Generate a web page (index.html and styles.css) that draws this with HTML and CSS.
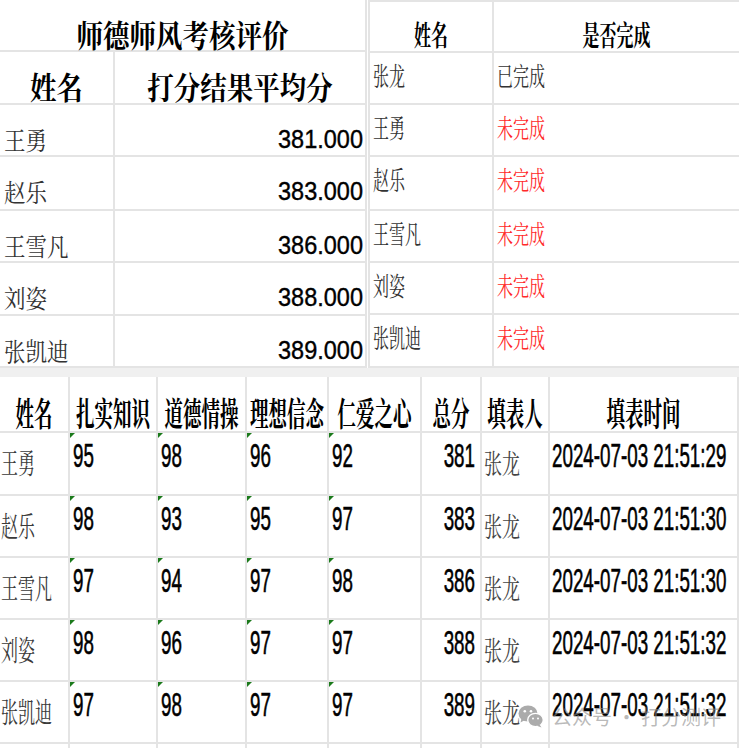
FILE: index.html
```html
<!DOCTYPE html>
<html lang="zh-CN">
<head>
<meta charset="utf-8">
<title>师德师风考核评价</title>
<link rel="stylesheet" href="styles.css">
</head>
<body>
<div class="page">
  <div class="top">
    <div class="ta">
      <div class="title"><span class="s">师德师风考核评价</span></div>
      <div class="hd"><span class="s">姓名</span></div>
      <div class="hd"><span class="s">打分结果平均分</span></div>
      <div class="nm"><span class="s">王勇</span></div>
      <div class="num"><span class="s">381.000</span></div>
      <div class="nm"><span class="s">赵乐</span></div>
      <div class="num"><span class="s">383.000</span></div>
      <div class="nm"><span class="s">王雪凡</span></div>
      <div class="num"><span class="s">386.000</span></div>
      <div class="nm"><span class="s">刘姿</span></div>
      <div class="num"><span class="s">388.000</span></div>
      <div class="nm"><span class="s">张凯迪</span></div>
      <div class="num"><span class="s">389.000</span></div>
    </div>
    <div class="tb">
      <div class="hd"><span class="s">姓名</span></div>
      <div class="hd"><span class="s">是否完成</span></div>
      <div class="bd"><span class="s">张龙</span></div>
      <div class="bd"><span class="s">已完成</span></div>
      <div class="bd"><span class="s">王勇</span></div>
      <div class="bd red"><span class="s">未完成</span></div>
      <div class="bd"><span class="s">赵乐</span></div>
      <div class="bd red"><span class="s">未完成</span></div>
      <div class="bd"><span class="s">王雪凡</span></div>
      <div class="bd red"><span class="s">未完成</span></div>
      <div class="bd"><span class="s">刘姿</span></div>
      <div class="bd red"><span class="s">未完成</span></div>
      <div class="bd"><span class="s">张凯迪</span></div>
      <div class="bd red"><span class="s">未完成</span></div>
    </div>
  </div>
  <div class="band"></div>
  <div class="tc">
    <div class="hd"><span class="s">姓名</span></div>
    <div class="hd"><span class="s">扎实知识</span></div>
    <div class="hd"><span class="s">道德情操</span></div>
    <div class="hd"><span class="s">理想信念</span></div>
    <div class="hd"><span class="s">仁爱之心</span></div>
    <div class="hd"><span class="s">总分</span></div>
    <div class="hd"><span class="s">填表人</span></div>
    <div class="hd"><span class="s">填表时间</span></div>

    <div class="nm"><span class="s">王勇</span></div>
    <div class="sc"><span class="s">95</span></div>
    <div class="sc"><span class="s">98</span></div>
    <div class="sc"><span class="s">96</span></div>
    <div class="sc"><span class="s">92</span></div>
    <div class="tot"><span class="s">381</span></div>
    <div class="who"><span class="s">张龙</span></div>
    <div class="dt"><span class="s">2024-07-03 21:51:29</span></div>

    <div class="nm"><span class="s">赵乐</span></div>
    <div class="sc"><span class="s">98</span></div>
    <div class="sc"><span class="s">93</span></div>
    <div class="sc"><span class="s">95</span></div>
    <div class="sc"><span class="s">97</span></div>
    <div class="tot"><span class="s">383</span></div>
    <div class="who"><span class="s">张龙</span></div>
    <div class="dt"><span class="s">2024-07-03 21:51:30</span></div>

    <div class="nm"><span class="s">王雪凡</span></div>
    <div class="sc"><span class="s">97</span></div>
    <div class="sc"><span class="s">94</span></div>
    <div class="sc"><span class="s">97</span></div>
    <div class="sc"><span class="s">98</span></div>
    <div class="tot"><span class="s">386</span></div>
    <div class="who"><span class="s">张龙</span></div>
    <div class="dt"><span class="s">2024-07-03 21:51:30</span></div>

    <div class="nm"><span class="s">刘姿</span></div>
    <div class="sc"><span class="s">98</span></div>
    <div class="sc"><span class="s">96</span></div>
    <div class="sc"><span class="s">97</span></div>
    <div class="sc"><span class="s">97</span></div>
    <div class="tot"><span class="s">388</span></div>
    <div class="who"><span class="s">张龙</span></div>
    <div class="dt"><span class="s">2024-07-03 21:51:32</span></div>

    <div class="nm"><span class="s">张凯迪</span></div>
    <div class="sc"><span class="s">97</span></div>
    <div class="sc"><span class="s">98</span></div>
    <div class="sc"><span class="s">97</span></div>
    <div class="sc"><span class="s">97</span></div>
    <div class="tot"><span class="s">389</span></div>
    <div class="who"><span class="s">张龙</span></div>
    <div class="dt"><span class="s">2024-07-03 21:51:32</span></div>

    <div class="empty"></div><div class="empty"></div><div class="empty"></div><div class="empty"></div>
    <div class="empty"></div><div class="empty"></div><div class="empty"></div><div class="empty"></div>
  </div>

  <div class="watermark">
    <svg class="wx" width="26" height="23" viewBox="0 0 26 23">
      <ellipse cx="10" cy="8.5" rx="9.5" ry="8" fill="#ababab"/>
      <path d="M3.5 13.5 L2.5 17.5 L7 15 Z" fill="#ababab"/>
      <circle cx="6.8" cy="6.3" r="1.3" fill="#fff"/>
      <circle cx="13" cy="6.3" r="1.3" fill="#fff"/>
      <ellipse cx="17.5" cy="15" rx="7.8" ry="6.6" fill="#ababab" stroke="#fff" stroke-width="1.4"/>
      <path d="M21.5 19.5 L23.5 22.5 L19 20.8 Z" fill="#ababab"/>
      <circle cx="15" cy="13.5" r="1" fill="#fff"/>
      <circle cx="20" cy="13.5" r="1" fill="#fff"/>
    </svg>
    <span class="wm-text">公众号 · 打分测评</span>
  </div>
</div>
</body>
</html>
```

FILE: styles.css
```css
* {
  box-sizing: border-box;
  margin: 0;
  padding: 0;
}

html, body {
  width: 739px;
  height: 748px;
  overflow: hidden;
  background: #ffffff;
}

body {
  font-family: "Noto Serif CJK SC", "Noto Sans CJK SC", serif;
  color: #000;
}

.page {
  position: relative;
  width: 739px;
  height: 748px;
  overflow: hidden;
}

.s {
  display: inline-block;
  line-height: 1;
  white-space: nowrap;
  transform-origin: 50% 50%;
}

/* ---------- top section ---------- */
.top {
  display: flex;
  gap: 1px;
  height: 368px;
}

/* left table: 师德师风考核评价 */
.ta {
  width: 367px;
  display: grid;
  grid-template-columns: 115px 252px;
  grid-template-rows: 52px 53px 52px 54px 52px 53px 52px;
}

.ta > div {
  display: flex;
  align-items: flex-start;
  border-bottom: 2px solid #e4e4e4;
  border-right: 2px solid #e4e4e4;
}

.ta .title {
  grid-column: 1 / 3;
  justify-content: center;
  padding-top: 21px;
}

.ta .title .s {
  font-size: 26.5px;
  font-weight: 700;
  transform: scaleY(1.15);
}

.ta .hd {
  justify-content: center;
  padding-top: 21px;
}

.ta .hd .s {
  font-size: 26.5px;
  font-weight: 700;
  transform: scaleY(1.15);
}

.ta .nm {
  padding: 24px 0 0 4px;
  color: #333;
}

.ta .nm .s {
  font-size: 21.5px;
  transform: scaleY(1.15);
}

.ta .num {
  justify-content: flex-end;
  padding: 23px 2px 0 0;
}

.ta .num .s {
  font-family: "Liberation Sans", Arial, sans-serif;
  font-size: 23.5px;
  -webkit-text-stroke: 0.35px #000;
  transform: scaleY(1.09);
}

/* right table: 是否完成 */
.tb {
  flex: 1;
  display: grid;
  grid-template-columns: 124px 245px;
  grid-template-rows: 51px 52px 52px 54px 52px 52px 53px;
  border-top: 2px solid #e4e4e4;
  border-left: 2px solid #e4e4e4;
}

.tb > div {
  display: flex;
  align-items: flex-start;
  border-bottom: 2px solid #e4e4e4;
}

.tb > div:nth-child(odd) {
  border-right: 2px solid #e4e4e4;
}

.tb .hd {
  justify-content: center;
  padding-top: 22.5px;
}

.tb .hd .s {
  font-size: 17px;
  font-weight: 700;
  transform: scaleY(1.7);
}

.tb .bd {
  padding: 14.5px 0 0 3px;
  color: #333;
}

.tb .bd .s {
  font-size: 16px;
  transform: scaleY(1.6);
}

.tb .red {
  color: #ff2a2a;
}

/* grey separator band */
.band {
  height: 9px;
  background: #f0f0f0;
}

/* bottom table */
.tc {
  display: grid;
  grid-template-columns: 70px 88px 89px 82px 93px 60px 68px 189px;
  grid-template-rows: 56px 63px 62px 62px 62px 62px 20px;
}

.tc > div {
  position: relative;
  display: flex;
  align-items: flex-start;
  border-bottom: 2px solid #e4e4e4;
  border-right: 2px solid #e4e4e4;
}

.tc .hd {
  justify-content: center;
  padding-top: 26px;
}

.tc .hd .s {
  font-size: 18.5px;
  font-weight: 700;
  transform: scaleY(1.78);
}

.tc .nm {
  padding: 19.5px 0 0 1px;
  color: #3a3a3a;
}

.tc .nm .s {
  font-size: 17px;
  transform: scaleY(1.7);
}

.tc .sc,
.tc .tot,
.tc .dt {
  padding-top: 15px;
  font-family: "Liberation Sans", Arial, sans-serif;
}

.tc .sc .s,
.tc .tot .s,
.tc .dt .s {
  font-size: 18.8px;
  -webkit-text-stroke: 0.35px #000;
  transform: scaleY(1.78);
}

.tc .sc {
  padding-left: 3px;
}

.tc .sc::before {
  content: "";
  position: absolute;
  left: 0;
  top: 0;
  border-top: 5px solid #1b7a1b;
  border-right: 5px solid transparent;
}

.tc .tot {
  justify-content: flex-end;
  padding-right: 5px;
}

.tc .who {
  padding: 20px 0 0 2px;
  color: #444;
}

.tc .who .s {
  font-size: 18px;
  transform: scaleY(1.5);
}

.tc .dt {
  padding-left: 2px;
}

/* watermark overlay */
.watermark {
  position: absolute;
  left: 518px;
  top: 705px;
  display: flex;
  align-items: center;
  gap: 8px;
  pointer-events: none;
}

.wm-text {
  font-family: "Noto Sans CJK SC", sans-serif;
  font-size: 20px;
  line-height: 1;
  color: rgba(140, 140, 140, 0.6);
}
```
